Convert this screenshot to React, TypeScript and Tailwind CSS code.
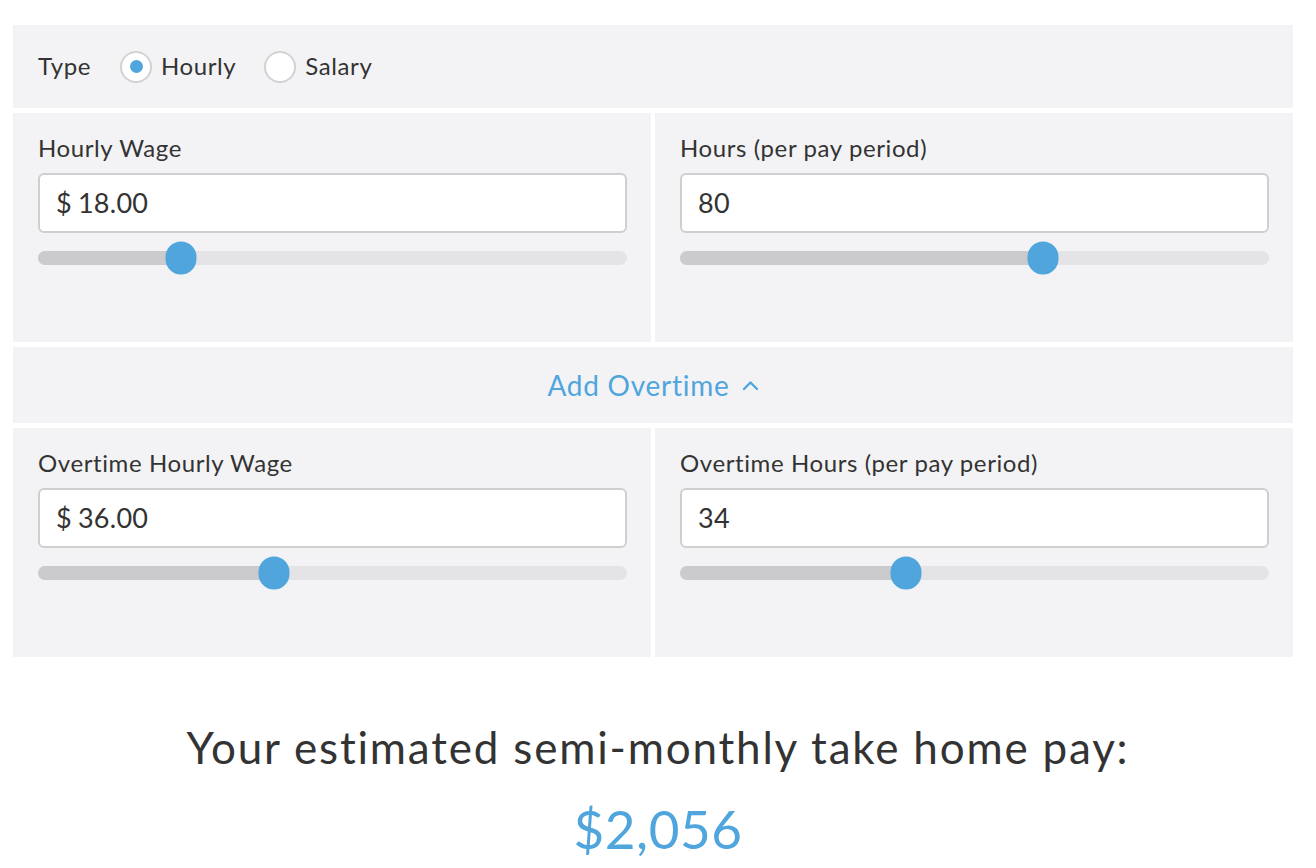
import React, { useState } from 'react';

interface SliderFieldProps {
    label: string;
    value: string;
    prefix?: string;
    percent: number;
}

const SliderField: React.FC<SliderFieldProps> = ({ label, value, prefix, percent }) => {
    return (
        <div className="bg-[#f3f3f5] pl-[25px] pr-[24px] pt-[21px] h-[229px]">
            <div className="text-[24px] leading-[28px] tracking-[0.025em] text-[#333]">{label}</div>
            <div className="mt-[11px] h-[60px] flex items-center bg-white border-2 border-[#cfcfcf] rounded-[6px] pl-[16px] text-[27px] tracking-[0.01em] text-[#333]">
                {prefix && <span className="mr-[6px]">{prefix}</span>}
                <span>{value}</span>
            </div>
            <div className="relative mt-[18px] h-[14px] rounded-full bg-[#e4e4e6]">
                <div className="h-full rounded-full bg-[#cbcbcd]" style={{ width: `${percent}%` }} />
                <div
                    className="absolute top-1/2 w-[31px] h-[33px] rounded-full bg-[#4fa5dc] -translate-x-1/2 -translate-y-1/2"
                    style={{ left: `${percent}%` }}
                />
            </div>
        </div>
    );
};

const Radio: React.FC<{ checked: boolean; label: string; onClick: () => void }> = ({ checked, label, onClick }) => (
    <button className="flex items-center cursor-pointer" onClick={onClick}>
        <span className="w-[32px] h-[32px] rounded-full bg-white border-2 border-[#d2d2d2] flex items-center justify-center">
            {checked && <span className="w-[13px] h-[13px] rounded-full bg-[#4fa5dc]" />}
        </span>
        <span className="ml-[9px] text-[24px] leading-[28px] tracking-[0.025em] text-[#333] -mt-[2px]">{label}</span>
    </button>
);

export default function App() {
    const [type, setType] = useState<'hourly' | 'salary'>('hourly');
    const [showOvertime, setShowOvertime] = useState(true);

    return (
        <div className="w-[1316px] bg-white pt-[25px] pb-[20px]" style={{ fontFamily: 'Lato, "Open Sans", sans-serif' }}>
            <div className="ml-[13px] mr-[23px] flex flex-col gap-[5px]">
                <div className="bg-[#f3f3f5] h-[83px] flex items-center pl-[25px] gap-[29px]">
                    <span className="text-[24px] leading-[28px] tracking-[0.025em] text-[#333] -mt-[2px]">Type</span>
                    <div className="flex items-center gap-[28px]">
                        <Radio checked={type === 'hourly'} label="Hourly" onClick={() => setType('hourly')} />
                        <Radio checked={type === 'salary'} label="Salary" onClick={() => setType('salary')} />
                    </div>
                </div>

                <div className="grid grid-cols-2 gap-[4px]">
                    <SliderField label="Hourly Wage" prefix="$" value="18.00" percent={24.3} />
                    <SliderField label="Hours (per pay period)" value="80" percent={61.7} />
                </div>

                <button
                    className="bg-[#f3f3f5] h-[76px] flex items-center justify-center text-[28px] tracking-[0.027em] text-[#4fa5dc] cursor-pointer"
                    onClick={() => setShowOvertime(!showOvertime)}
                >
                    Add Overtime
                    <svg className="ml-[12px]" width="17" height="11" viewBox="0 0 17 11" fill="none">
                        <path d="M2 9 L8.5 2.5 L15 9" stroke="#4fa5dc" strokeWidth="2.4" strokeLinecap="round" strokeLinejoin="round" />
                    </svg>
                </button>

                {showOvertime && (
                    <div className="grid grid-cols-2 gap-[4px]">
                        <SliderField label="Overtime Hourly Wage" prefix="$" value="36.00" percent={40} />
                        <SliderField label="Overtime Hours (per pay period)" value="34" percent={38.3} />
                    </div>
                )}
            </div>

            <div className="mt-[64px] text-center text-[44px] leading-[52px] tracking-[0.041em] text-[#333]">
                Your estimated semi-monthly take home pay:
            </div>
            <div className="mt-[26px] text-center text-[53px] leading-[60px] tracking-[0.01em] text-[#4fa5dc]">$2,056</div>
        </div>
    );
}
